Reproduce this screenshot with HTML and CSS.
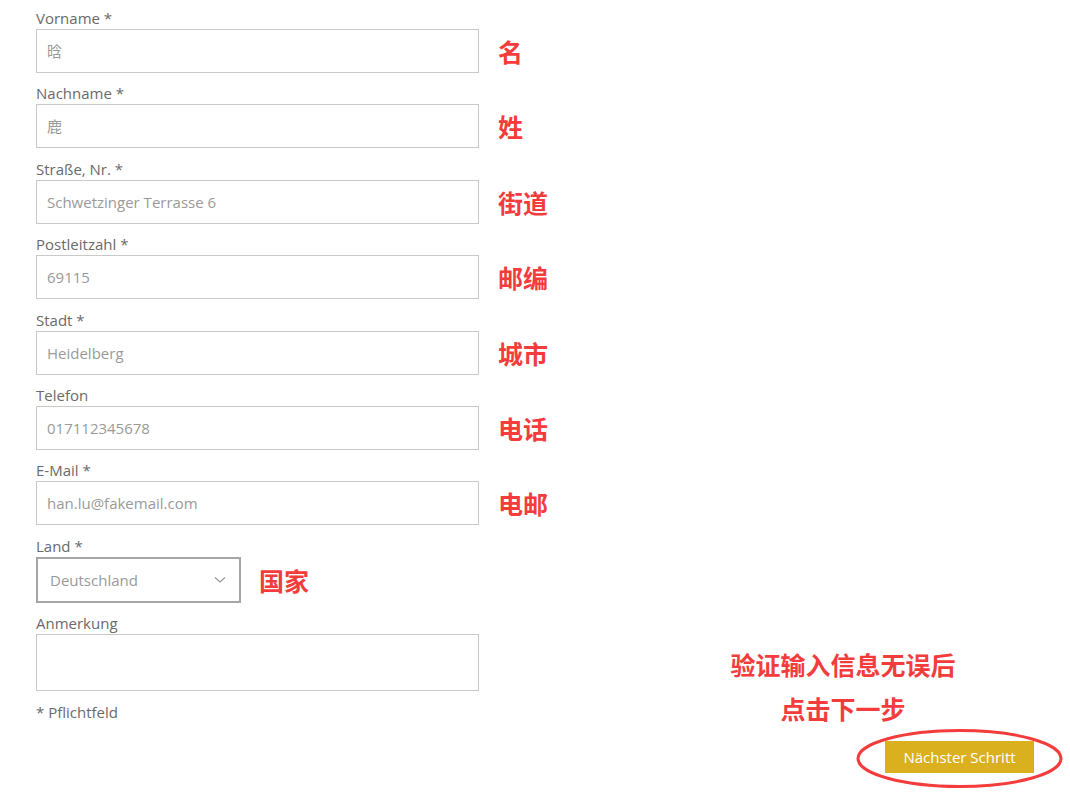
FILE: index.html
```html
<!DOCTYPE html>
<html lang="de">
<head>
    <meta charset="UTF-8">
    <title>Adresse</title>
    <link rel="stylesheet" href="styles.css">
</head>
<body>
    <div class="page">
        <form class="form">
            <div class="group">
                <label class="label">Vorname *</label>
                <div class="row">
                    <input class="field" type="text" placeholder="晗">
                    <span class="note">名</span>
                </div>
            </div>
            <div class="group">
                <label class="label">Nachname *</label>
                <div class="row">
                    <input class="field" type="text" placeholder="鹿">
                    <span class="note">姓</span>
                </div>
            </div>
            <div class="group">
                <label class="label">Straße, Nr. *</label>
                <div class="row">
                    <input class="field" type="text" placeholder="Schwetzinger Terrasse 6">
                    <span class="note">街道</span>
                </div>
            </div>
            <div class="group">
                <label class="label">Postleitzahl *</label>
                <div class="row">
                    <input class="field" type="text" placeholder="69115">
                    <span class="note">邮编</span>
                </div>
            </div>
            <div class="group">
                <label class="label">Stadt *</label>
                <div class="row">
                    <input class="field" type="text" placeholder="Heidelberg">
                    <span class="note">城市</span>
                </div>
            </div>
            <div class="group">
                <label class="label">Telefon</label>
                <div class="row">
                    <input class="field" type="text" placeholder="017112345678">
                    <span class="note">电话</span>
                </div>
            </div>
            <div class="group">
                <label class="label">E-Mail *</label>
                <div class="row">
                    <input class="field" type="text" placeholder="han.lu@fakemail.com">
                    <span class="note">电邮</span>
                </div>
            </div>
            <div class="group">
                <label class="label">Land *</label>
                <div class="row">
                    <div class="select">
                        <span>Deutschland</span>
                        <svg width="12" height="8" viewBox="0 0 12 8"><path d="M1 1.5 L6 6 L11 1.5" fill="none" stroke="#999" stroke-width="1.3"/></svg>
                    </div>
                    <span class="note">国家</span>
                </div>
            </div>
            <div class="group">
                <label class="label">Anmerkung</label>
                <textarea class="area"></textarea>
            </div>
            <p class="hint">* Pflichtfeld</p>
        </form>

        <div class="aside">
            <p class="tip">验证输入信息无误后<br>点击下一步</p>
            <div class="btn-wrap">
                <button class="btn" type="button">Nächster Schritt</button>
                <svg class="ring" width="207" height="61" viewBox="0 0 207 61"><ellipse cx="103.5" cy="30.5" rx="101.5" ry="28" fill="none" stroke="#f43c3c" stroke-width="3"/></svg>
            </div>
        </div>
    </div>
</body>
</html>
```

FILE: styles.css
```css
body{
    margin: 0;
    background-color: #fff;
    font-family: "Open Sans", "Noto Sans", sans-serif;
    color: #6a6a6a;
}
.page{
    display: flex;
    width: 1070px;
    height: 801px;
}
.form{
    width: 664px;
    padding: 7px 0 0 36px;
    margin: 0;
}
.group{
    margin-bottom: 9.4px;
}
.label{
    display: block;
    font-size: 15px;
    line-height: 22px;
}
.row{
    display: flex;
    align-items: center;
}
.field{
    box-sizing: border-box;
    width: 443px;
    height: 44px;
    margin: 0;
    padding: 0 10px;
    border: 1px solid #c9c9c9;
    font-family: "Open Sans", "Noto Sans CJK SC", sans-serif;
    font-size: 15px;
    outline: none;
}
.field::placeholder{
    color: #9a9a9a;
}
.note{
    margin-left: 19px;
    color: #f43c3c;
    font-family: "Noto Sans CJK SC", sans-serif;
    font-weight: 700;
    font-size: 25px;
}
.select{
    box-sizing: border-box;
    width: 205px;
    height: 46px;
    display: flex;
    align-items: center;
    justify-content: space-between;
    padding: 0 13px 0 12px;
    border: 2px solid #a6a6a6;
    font-size: 15px;
    color: #9a9a9a;
}
.select + .note{
    margin-left: 18px;
}
.area{
    box-sizing: border-box;
    display: block;
    width: 443px;
    height: 57px;
    margin: 0;
    border: 1px solid #c9c9c9;
    resize: none;
}
.hint{
    margin: 0;
    font-size: 15px;
    line-height: 22px;
}
.aside{
    align-self: flex-end;
    width: 370px;
    margin-bottom: 28px;
}
.tip{
    width: 286px;
    margin: 0 0 11px 0;
    text-align: center;
    color: #f43c3c;
    font-family: "Noto Sans CJK SC", sans-serif;
    font-weight: 700;
    font-size: 25px;
    line-height: 44px;
}
.btn-wrap{
    position: relative;
    width: 149px;
    margin-left: 185px;
}
.btn{
    display: block;
    width: 149px;
    height: 32px;
    padding: 0;
    border: none;
    background-color: #dbb01e;
    color: #fff;
    font-family: "Open Sans", sans-serif;
    font-size: 15px;
}
.ring{
    position: absolute;
    left: -29px;
    top: -13px;
}
```
